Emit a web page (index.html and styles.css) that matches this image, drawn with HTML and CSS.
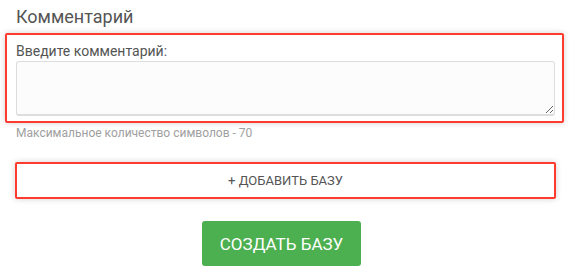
FILE: index.html
```html
<!DOCTYPE html>
<html lang="ru">
<head>
<meta charset="utf-8">
<link rel="stylesheet" href="styles.css">
</head>
<body>
<div class="page">
  <h3 class="title">Комментарий</h3>
  <div class="group highlight">
    <label class="label" for="comment">Введите комментарий:</label>
    <textarea id="comment" class="textarea"></textarea>
  </div>
  <div class="help">Максимальное количество символов - 70</div>
  <button class="add-btn" type="button">+ ДОБАВИТЬ БАЗУ</button>
  <div class="actions">
    <button class="create-btn" type="button">СОЗДАТЬ БАЗУ</button>
  </div>
</div>
</body>
</html>
```
FILE: styles.css
```css
html, body {
  margin: 0;
  padding: 0;
  background: #fff;
}
body {
  font-family: Roboto, "Noto Sans", sans-serif;
  color: #555;
}
.page {
  width: 539px;
  padding: 0 0 0 16px;
}
.title {
  margin: 0;
  padding-top: 6px;
  font-size: 18px;
  font-weight: 400;
  line-height: 22px;
  color: #555;
}
.highlight {
  margin: 5px -9px 0 -11px;
  padding: 8px 7px 5px 9px;
  border: 2px solid #ff3b30;
  border-radius: 2px;
  box-shadow: 0 0 6px rgba(0, 0, 0, 0.18);
}
.label {
  display: block;
  font-size: 14px;
  line-height: 16px;
  color: #555;
}
.textarea {
  display: block;
  box-sizing: border-box;
  width: 539px;
  height: 55px;
  margin-top: 2px;
  border: 1px solid #ddd;
  border-bottom-width: 2px;
  border-radius: 3px;
  background: #fcfcfc;
  resize: vertical;
  font-family: inherit;
}
.help {
  margin-top: 2px;
  font-size: 12px;
  line-height: 16px;
  color: #a0a0a0;
}
.add-btn {
  display: block;
  box-sizing: border-box;
  width: 541px;
  height: 37px;
  margin: 21px 0 0 -1px;
  border: 2px solid #ff3b30;
  border-radius: 2px;
  background: #fff;
  box-shadow: 0 0 6px rgba(0, 0, 0, 0.18);
  font-family: inherit;
  font-size: 13px;
  color: #555;
  padding: 0;
}
.actions {
  display: flex;
  justify-content: center;
  margin-top: 22px;
}
.create-btn {
  box-sizing: border-box;
  width: 159px;
  height: 45px;
  margin-right: 8px;
  border: none;
  border-radius: 3px;
  background: #4caf50;
  color: #fff;
  font-family: inherit;
  font-size: 17px;
  padding: 0;
}
```
